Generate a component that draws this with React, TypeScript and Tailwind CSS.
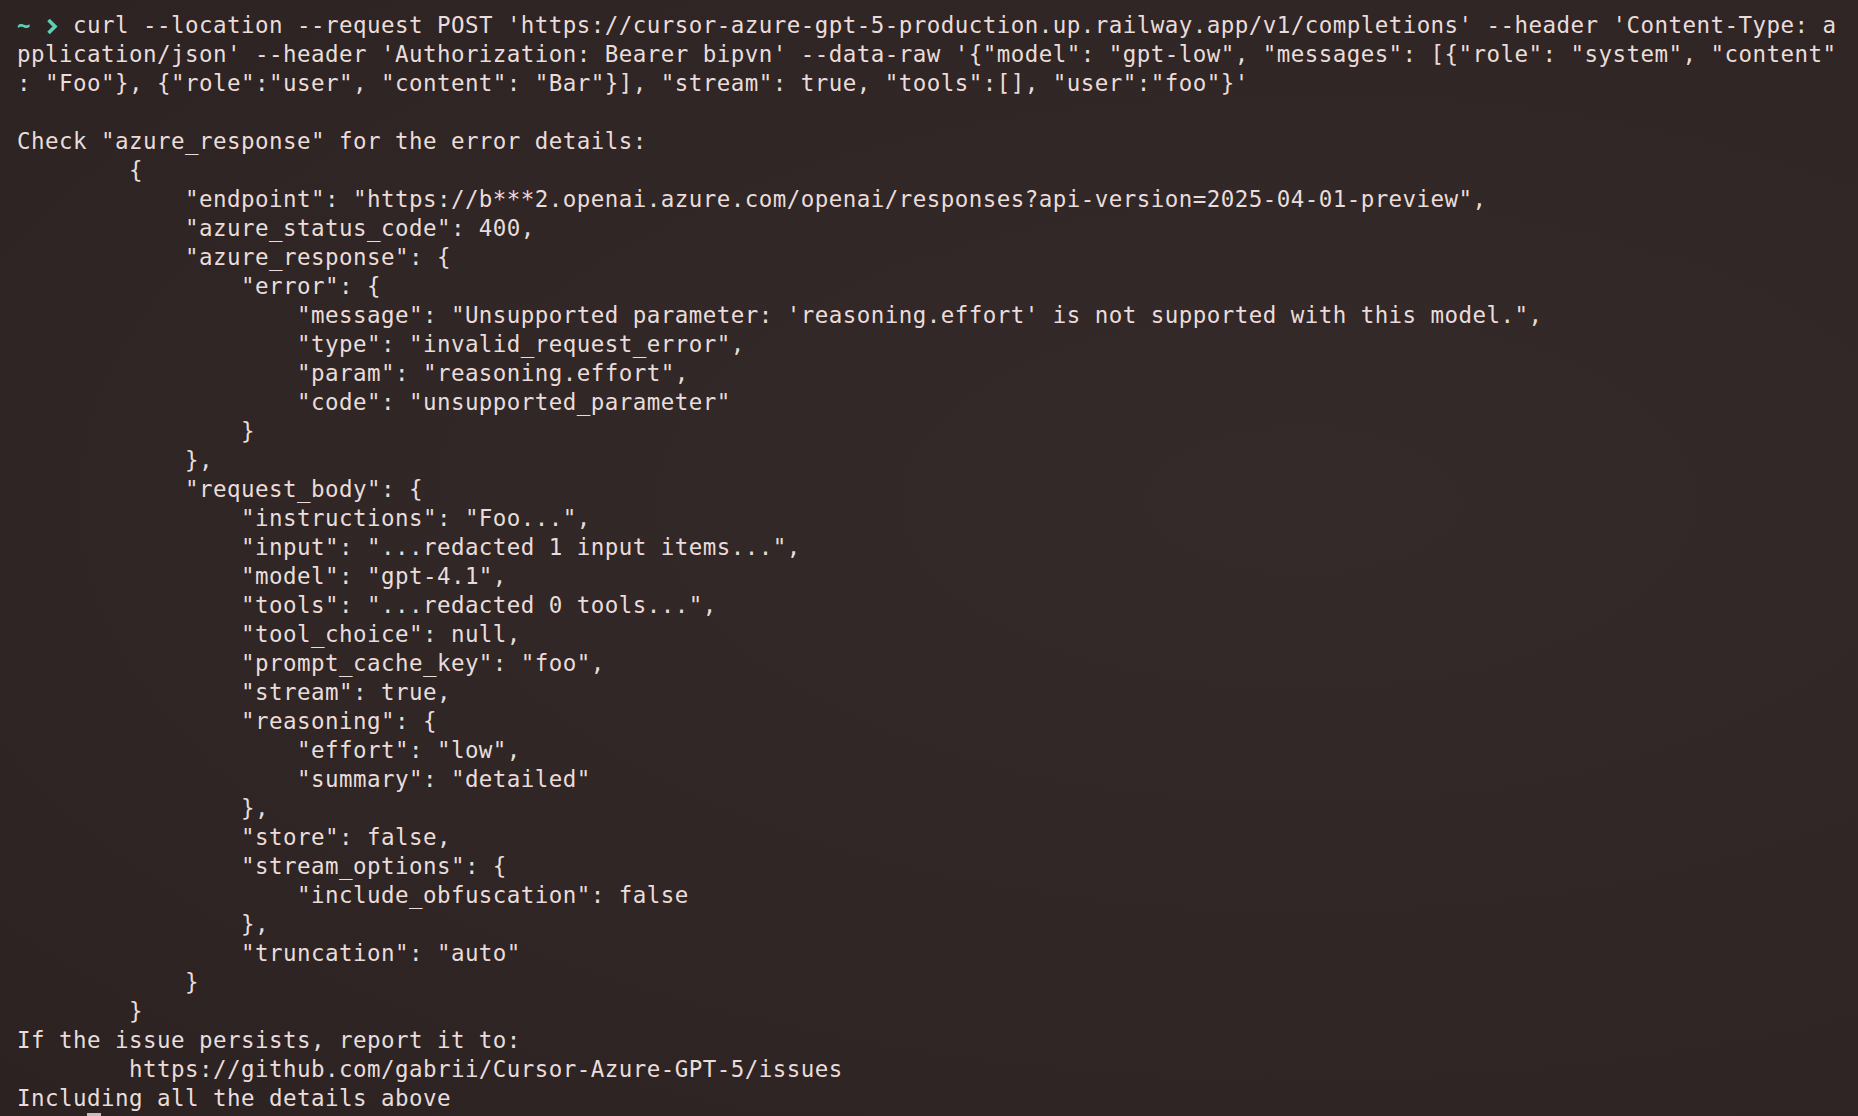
import React from "react";

// terminal output, tabs expanded to 8 columns
const lines: string[] = [
  `pplication/json' --header 'Authorization: Bearer bipvn' --data-raw '{"model": "gpt-low", "messages": [{"role": "system", "content"`,
  `: "Foo"}, {"role":"user", "content": "Bar"}], "stream": true, "tools":[], "user":"foo"}'`,
  ``,
  `Check "azure_response" for the error details:`,
  `        {`,
  `            "endpoint": "https://b***2.openai.azure.com/openai/responses?api-version=2025-04-01-preview",`,
  `            "azure_status_code": 400,`,
  `            "azure_response": {`,
  `                "error": {`,
  `                    "message": "Unsupported parameter: 'reasoning.effort' is not supported with this model.",`,
  `                    "type": "invalid_request_error",`,
  `                    "param": "reasoning.effort",`,
  `                    "code": "unsupported_parameter"`,
  `                }`,
  `            },`,
  `            "request_body": {`,
  `                "instructions": "Foo...",`,
  `                "input": "...redacted 1 input items...",`,
  `                "model": "gpt-4.1",`,
  `                "tools": "...redacted 0 tools...",`,
  `                "tool_choice": null,`,
  `                "prompt_cache_key": "foo",`,
  `                "stream": true,`,
  `                "reasoning": {`,
  `                    "effort": "low",`,
  `                    "summary": "detailed"`,
  `                },`,
  `                "store": false,`,
  `                "stream_options": {`,
  `                    "include_obfuscation": false`,
  `                },`,
  `                "truncation": "auto"`,
  `            }`,
  `        }`,
  `If the issue persists, report it to:`,
  `        https://github.com/gabrii/Cursor-Azure-GPT-5/issues`,
  `Including all the details above`,
];

function Prompt() {
  return (
    <div className="flex h-[29px] items-center whitespace-pre">
      <span className="inline-block w-[14px] text-center font-bold text-[#5ccfb4]">~</span>
      <span className="inline-block w-[14px]"> </span>
      <span className="flex w-[14px] items-center justify-center pt-[2px]">
        <svg width="12" height="17" viewBox="0 0 12 17" fill="none">
          <path d="M2.5 2 L9 8.5 L2.5 15" stroke="#5ccfb4" strokeWidth="3.6" strokeLinejoin="miter" />
        </svg>
      </span>
      <span>{` curl --location --request POST 'https://cursor-azure-gpt-5-production.up.railway.app/v1/completions' --header 'Content-Type: a`}</span>
    </div>
  );
}

export default function App() {
  return (
    <div className="h-[1116px] w-full overflow-hidden bg-[radial-gradient(ellipse_at_70%_45%,#352a2a_0%,#302726_45%,#2b2221_100%)] px-[17px] pt-[11px] text-[22.5px] leading-[29px] tracking-[0.45px] text-[#eadcda] [font-family:'DejaVu_Sans_Mono',monospace]">
      <Prompt />
      {lines.map((line, i) => (
        <div key={i} className="h-[29px] whitespace-pre">
          {line}
        </div>
      ))}
      <div className="h-[29px] whitespace-pre">
        <span className="inline-block w-[70px]"></span>
        <span className="inline-block h-[27px] w-[14px] bg-[#c9bdbc]"></span>
      </div>
    </div>
  );
}
